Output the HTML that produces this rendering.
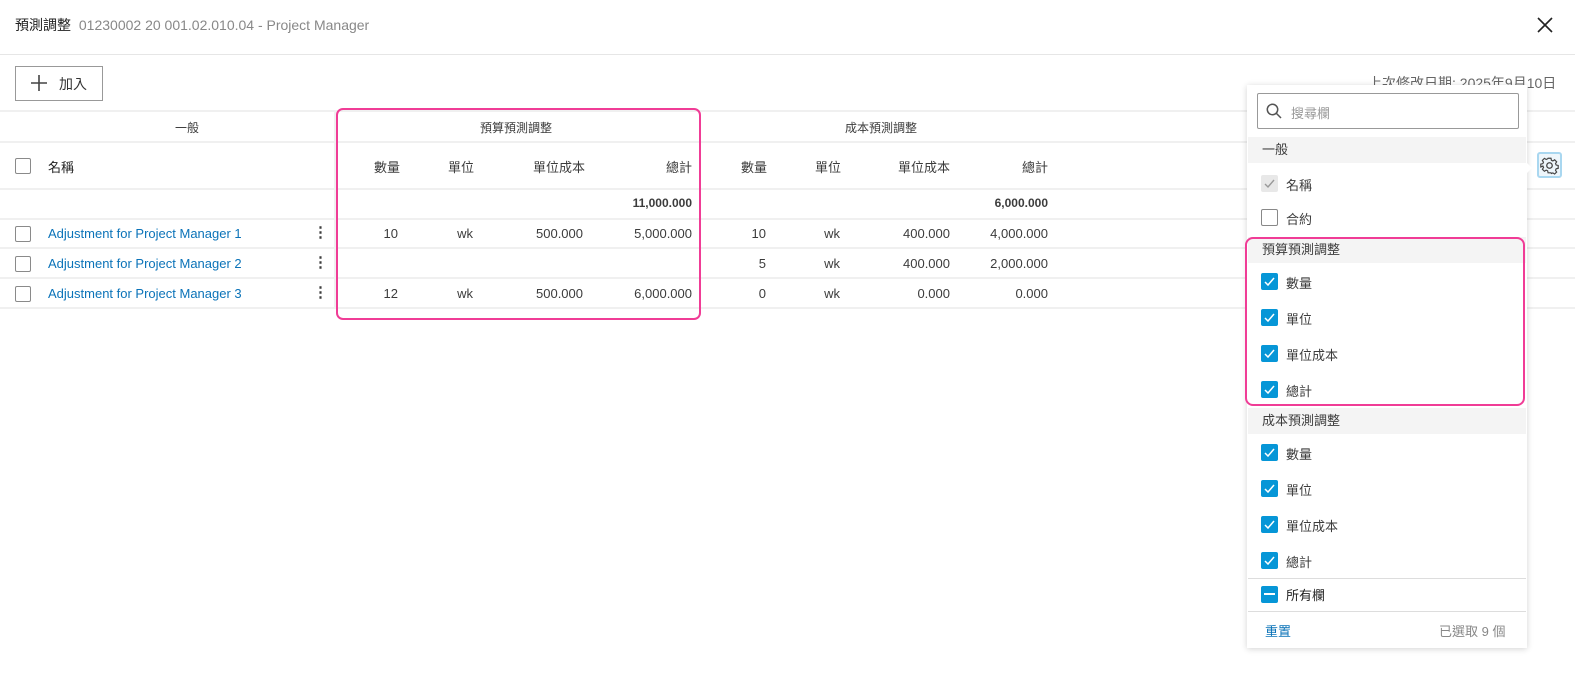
<!DOCTYPE html>
<html><head><meta charset="utf-8"><style>
*{margin:0;padding:0;box-sizing:border-box}
body{width:1575px;height:680px;background:#fff;font-family:"Liberation Sans","Noto Sans CJK TC",sans-serif;color:#3c3c3c;position:relative;overflow:hidden;font-size:13px}
.a{position:absolute;white-space:nowrap}
.hl{position:absolute;left:0;height:2px;background:#f0f0f0}
.r{text-align:right}
.cb{position:absolute;width:16px;height:16px;border:1px solid #8a8a8a;border-radius:2px;background:#fff}
.link{color:#0b73b8}
.pcb{position:absolute;left:1261px;width:17px;height:17px;border-radius:2px;background:#0696d7}
.pcb svg{position:absolute;left:2px;top:2px}
.plab{position:absolute;left:1286px;font-size:13px;color:#3c3c3c}
.sec{position:absolute;left:1248px;width:278px;height:26px;background:#f4f4f4;padding-left:14px;line-height:26px;font-size:13px;color:#3c3c3c}
</style></head><body>
<div class="a" style="left:15px;top:15px;font-size:14px;color:#222">預測調整 <span style="color:#888;margin-left:4px">01230002 20 001.02.010.04 - Project Manager</span></div>
<svg class="a" style="left:1537px;top:17px" width="16" height="16"><path d="M1 1L15 15M15 1L1 15" stroke="#222" stroke-width="1.6"/></svg>
<div class="hl" style="top:54px;width:1575px;height:1px;background:#e6e6e6"></div>
<div class="a" style="left:15px;top:66px;width:88px;height:35px;border:1px solid #999;background:#fff"></div>
<svg class="a" style="left:31px;top:75px" width="16" height="16"><path d="M8 0V16M0 8H16" stroke="#444" stroke-width="1.6"/></svg>
<div class="a" style="left:59px;top:74px;font-size:14px;color:#333">加入</div>
<div class="a" style="left:1368px;top:73px;font-size:14px;color:#666">上次修改日期: 2025年9月10日</div>

<div class="hl" style="top:110px;width:1575px"></div>
<div class="hl" style="top:141px;width:1575px"></div>
<div class="hl" style="top:188px;width:1575px"></div>
<div class="hl" style="top:218px;width:1575px"></div>
<div class="hl" style="top:247px;width:1575px"></div>
<div class="hl" style="top:277px;width:1575px"></div>
<div class="hl" style="top:307px;width:1575px"></div>
<div class="a" style="left:334px;top:110px;width:2px;height:199px;background:#f0f0f0"></div>

<div class="a" style="left:175px;top:119px;font-size:12px">一般</div>
<div class="a" style="left:480px;top:119px;font-size:12px">預算預測調整</div>
<div class="a" style="left:845px;top:119px;font-size:12px">成本預測調整</div>

<div class="cb" style="left:15px;top:158px"></div>
<div class="a" style="left:48px;top:157px;font-size:13px;color:#222">名稱</div>
<div class="a r" style="left:340px;width:60px;top:157px">數量</div>
<div class="a" style="left:448px;top:157px">單位</div>
<div class="a r" style="left:500px;width:85px;top:157px">單位成本</div>
<div class="a r" style="left:600px;width:92px;top:157px">總計</div>
<div class="a r" style="left:700px;width:67px;top:157px">數量</div>
<div class="a" style="left:815px;top:157px">單位</div>
<div class="a r" style="left:860px;width:90px;top:157px">單位成本</div>
<div class="a r" style="left:960px;width:88px;top:157px">總計</div>

<div class="a r" style="left:600px;width:92px;top:196px;font-weight:bold;font-size:12px">11,000.000</div>
<div class="a r" style="left:960px;width:88px;top:196px;font-weight:bold;font-size:12px">6,000.000</div>

<div class="cb" style="left:15px;top:226px"></div>
<div class="a link" style="left:48px;top:226px">Adjustment for Project Manager 1</div>
<div class="a" style="left:313px;top:224px;font-weight:bold;font-size:15px;line-height:18px">⋮</div>
<div class="a r" style="left:340px;width:58px;top:226px">10</div>
<div class="a r" style="left:420px;width:53px;top:226px">wk</div>
<div class="a r" style="left:500px;width:83px;top:226px">500.000</div>
<div class="a r" style="left:600px;width:92px;top:226px">5,000.000</div>
<div class="a r" style="left:700px;width:66px;top:226px">10</div>
<div class="a r" style="left:780px;width:60px;top:226px">wk</div>
<div class="a r" style="left:860px;width:90px;top:226px">400.000</div>
<div class="a r" style="left:960px;width:88px;top:226px">4,000.000</div>

<div class="cb" style="left:15px;top:256px"></div>
<div class="a link" style="left:48px;top:256px">Adjustment for Project Manager 2</div>
<div class="a" style="left:313px;top:254px;font-weight:bold;font-size:15px;line-height:18px">⋮</div>
<div class="a r" style="left:700px;width:66px;top:256px">5</div>
<div class="a r" style="left:780px;width:60px;top:256px">wk</div>
<div class="a r" style="left:860px;width:90px;top:256px">400.000</div>
<div class="a r" style="left:960px;width:88px;top:256px">2,000.000</div>

<div class="cb" style="left:15px;top:286px"></div>
<div class="a link" style="left:48px;top:286px">Adjustment for Project Manager 3</div>
<div class="a" style="left:313px;top:284px;font-weight:bold;font-size:15px;line-height:18px">⋮</div>
<div class="a r" style="left:340px;width:58px;top:286px">12</div>
<div class="a r" style="left:420px;width:53px;top:286px">wk</div>
<div class="a r" style="left:500px;width:83px;top:286px">500.000</div>
<div class="a r" style="left:600px;width:92px;top:286px">6,000.000</div>
<div class="a r" style="left:700px;width:66px;top:286px">0</div>
<div class="a r" style="left:780px;width:60px;top:286px">wk</div>
<div class="a r" style="left:860px;width:90px;top:286px">0.000</div>
<div class="a r" style="left:960px;width:88px;top:286px">0.000</div>

<div class="a" style="left:336px;top:108px;width:365px;height:212px;border:2px solid #f03c96;border-radius:7px"></div>

<!-- gear -->
<div class="a" style="left:1537px;top:152px;width:25px;height:26px;border:2px solid #a9d7f0;border-radius:3px;background:#eef6fb"></div>
<svg class="a" style="left:1540px;top:156px" width="19" height="19" viewBox="0 0 24 24"><path d="M10 2h4l.6 2.8 2 .9 2.4-1.6 2.8 2.8-1.6 2.4.9 2 2.8.6v4l-2.8.6-.9 2 1.6 2.4-2.8 2.8-2.4-1.6-2 .9L14 22h-4l-.6-2.8-2-.9-2.4 1.6-2.8-2.8 1.6-2.4-.9-2L0 14v-4l2.8-.6.9-2L2.1 5 5 2.1l2.4 1.6 2-.9z" fill="none" stroke="#444" stroke-width="1.6" transform="translate(1 1) scale(.92)"/><circle cx="12" cy="12" r="3.5" fill="none" stroke="#444" stroke-width="1.6"/></svg>

<!-- panel -->
<div class="a" style="left:1247px;top:85px;width:280px;height:563px;background:#fff;box-shadow:0 1px 6px rgba(0,0,0,.18)"></div>
<div class="a" style="left:1524px;top:160px;width:0;height:0;border-top:8px solid transparent;border-bottom:8px solid transparent;border-left:8px solid #fff"></div>
<div class="a" style="left:1257px;top:93px;width:262px;height:36px;border:1px solid #999;border-radius:2px"></div>
<svg class="a" style="left:1266px;top:103px" width="16" height="16"><circle cx="6.5" cy="6.5" r="5.2" fill="none" stroke="#555" stroke-width="1.5"/><path d="M10.5 10.5L15 15" stroke="#555" stroke-width="1.5"/></svg>
<div class="a" style="left:1291px;top:103px;color:#999">搜尋欄</div>

<div class="sec" style="top:137px">一般</div>
<div class="pcb" style="top:175px;background:#e8e8e8"><svg width="13" height="13"><path d="M2 7L5 10 11 3" fill="none" stroke="#999" stroke-width="1.4"/></svg></div>
<div class="plab" style="top:175px">名稱</div>
<div class="pcb" style="top:209px;background:#fff;border:1px solid #888"></div>
<div class="plab" style="top:209px">合約</div>

<div class="sec" style="top:237px">預算預測調整</div>
<div class="pcb" style="top:273px"><svg width="13" height="13"><path d="M2 7L5 10 11 3" fill="none" stroke="#fff" stroke-width="1.5"/></svg></div><div class="plab" style="top:273px">數量</div>
<div class="pcb" style="top:309px"><svg width="13" height="13"><path d="M2 7L5 10 11 3" fill="none" stroke="#fff" stroke-width="1.5"/></svg></div><div class="plab" style="top:309px">單位</div>
<div class="pcb" style="top:345px"><svg width="13" height="13"><path d="M2 7L5 10 11 3" fill="none" stroke="#fff" stroke-width="1.5"/></svg></div><div class="plab" style="top:345px">單位成本</div>
<div class="pcb" style="top:381px"><svg width="13" height="13"><path d="M2 7L5 10 11 3" fill="none" stroke="#fff" stroke-width="1.5"/></svg></div><div class="plab" style="top:381px">總計</div>

<div class="sec" style="top:408px">成本預測調整</div>
<div class="pcb" style="top:444px"><svg width="13" height="13"><path d="M2 7L5 10 11 3" fill="none" stroke="#fff" stroke-width="1.5"/></svg></div><div class="plab" style="top:444px">數量</div>
<div class="pcb" style="top:480px"><svg width="13" height="13"><path d="M2 7L5 10 11 3" fill="none" stroke="#fff" stroke-width="1.5"/></svg></div><div class="plab" style="top:480px">單位</div>
<div class="pcb" style="top:516px"><svg width="13" height="13"><path d="M2 7L5 10 11 3" fill="none" stroke="#fff" stroke-width="1.5"/></svg></div><div class="plab" style="top:516px">單位成本</div>
<div class="pcb" style="top:552px"><svg width="13" height="13"><path d="M2 7L5 10 11 3" fill="none" stroke="#fff" stroke-width="1.5"/></svg></div><div class="plab" style="top:552px">總計</div>

<div class="a" style="left:1248px;top:578px;width:278px;height:1px;background:#ddd"></div>
<div class="pcb" style="top:586px"><div style="position:absolute;left:3px;top:7px;width:11px;height:2px;background:#fff"></div></div>
<div class="plab" style="top:585px;color:#222">所有欄</div>
<div class="a" style="left:1248px;top:611px;width:278px;height:1px;background:#ddd"></div>
<div class="a link" style="left:1265px;top:621px">重置</div>
<div class="a" style="left:1439px;top:621px;color:#888">已選取 9 個</div>

<div class="a" style="left:1245px;top:237px;width:280px;height:169px;border:2px solid #f03c96;border-radius:8px"></div>
</body></html>
